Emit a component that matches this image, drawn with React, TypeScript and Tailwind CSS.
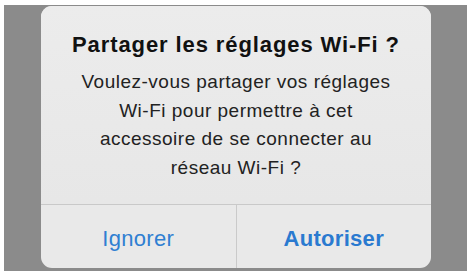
import React from "react";

export default function App() {
  return (
    <div className="w-[467px] h-[273px] bg-white pt-[5px] pl-[4px] pb-[2px] flex" style={{ fontFamily: '"Liberation Sans", Arial, sans-serif' }}>
      <div className="flex-1 bg-[#8b8b8b] pl-[37px] pt-[1px]">
        <div className="w-[390px] h-[262px] rounded-[11px] bg-[#e9e9e9] flex flex-col overflow-hidden">
          <div className="h-[198px] flex flex-col items-center pt-[27px] bg-gradient-to-b from-[#ececec] to-[#e7e7e7]">
            <div className="text-[22px] leading-[24px] font-bold text-[#111] tracking-[0.9px] whitespace-nowrap">Partager les réglages Wi-Fi ?</div>
            <div className="mt-[11px] text-[19px] leading-[28.5px] text-[#222] text-center tracking-[0.5px] whitespace-nowrap">
              Voulez-vous partager vos réglages<br />Wi-Fi pour permettre à cet<br />accessoire de se connecter au<br />réseau Wi-Fi ?
            </div>
          </div>
          <div className="h-px bg-[#c9c9c9]" />
          <div className="flex-1 flex">
            <div className="flex-1 flex items-center justify-center text-[22px] text-[#2f7fd2] pt-[4px] tracking-[0.3px]">Ignorer</div>
            <div className="w-px bg-[#cacaca]" />
            <div className="flex-1 flex items-center justify-center text-[22px] font-bold text-[#2a7ad0] pt-[4px] tracking-[0.3px]">Autoriser</div>
          </div>
        </div>
      </div>
    </div>
  );
}
